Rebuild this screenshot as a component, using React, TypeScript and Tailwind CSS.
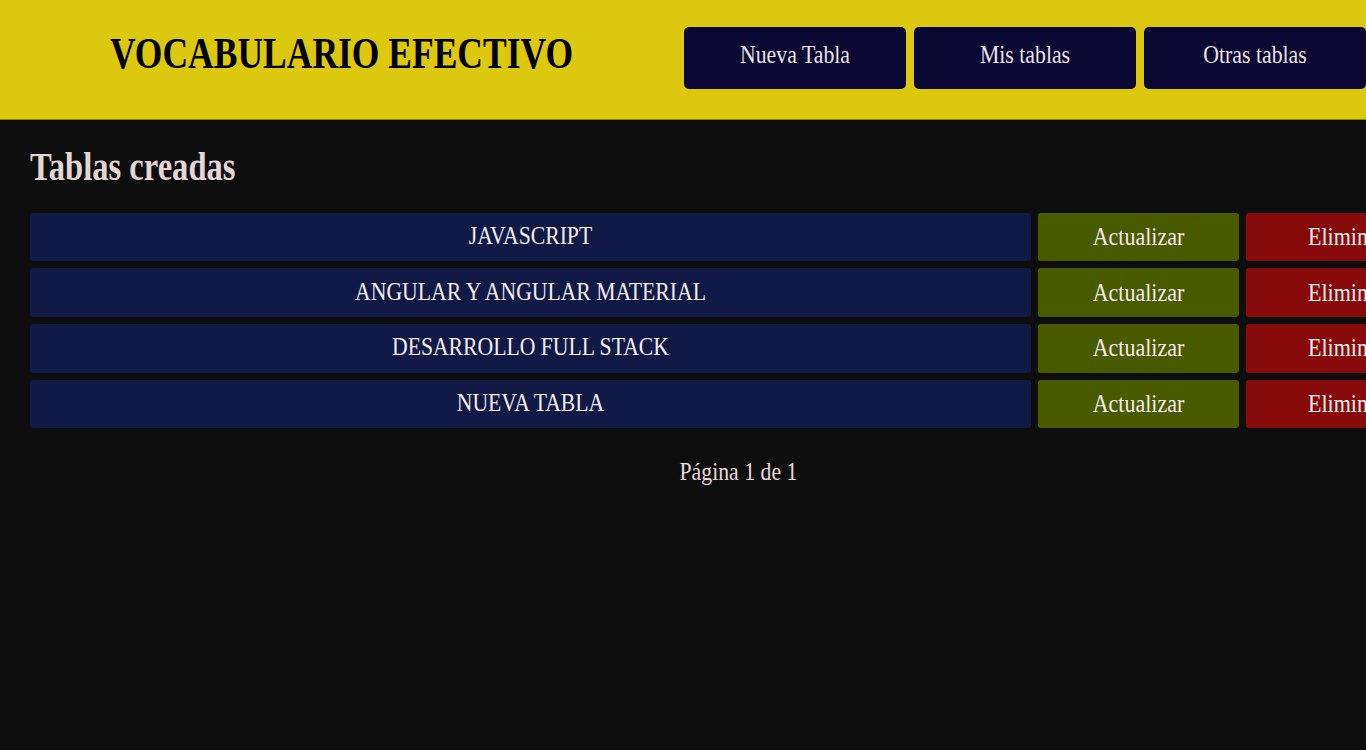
import React from "react";

const rows = ["JAVASCRIPT", "ANGULAR Y ANGULAR MATERIAL", "DESARROLLO FULL STACK", "NUEVA TABLA"];

export default function App() {
  const serif = { fontFamily: '"Liberation Serif", "Times New Roman", serif' };
  return (
    <div className="w-[1366px] h-[750px] overflow-hidden bg-[#0f0e0f]" style={serif}>
      <header className="h-[120px] bg-[#dbc80f] border-b border-[#8f8208] grid grid-cols-2">
        <div className="flex items-center justify-center pb-[12px]">
          <h1 className="text-[35.5px] leading-none font-bold text-black scale-y-125 whitespace-nowrap">
            VOCABULARIO EFECTIVO
          </h1>
        </div>
        <nav className="flex gap-[8px] pt-[27px] pl-px">
          {["Nueva Tabla", "Mis tablas", "Otras tablas"].map((b) => (
            <button
              key={b}
              className="w-[222px] h-[62px] shrink-0 rounded-[5px] bg-[#0b0834] text-[#ece4e4] text-[21.8px] leading-none flex items-center justify-center pb-[4px]"
            >
              <span className="scale-y-[1.18] whitespace-nowrap">{b}</span>
            </button>
          ))}
        </nav>
      </header>
      <main className="pl-[30px] w-[1447px]">
        <h2 className="pt-[30px] text-[32.6px] leading-none font-bold text-[#e2d6d6]">
          <span className="inline-block scale-y-125 origin-center">Tablas creadas</span>
        </h2>
        <div className="mt-[30px] flex flex-col gap-[7px]">
          {rows.map((r) => (
            <div key={r} className="flex gap-[7px] h-[48.7px]">
              <div className="w-[1001px] shrink-0 rounded-[3px] bg-[#111a47] flex items-center justify-center text-[#f4eeee] text-[21.7px] leading-none">
                <span className="scale-y-[1.18] whitespace-nowrap">{r}</span>
              </div>
              <div className="w-[201px] shrink-0 rounded-[3px] bg-[#4a5a00] flex items-center justify-center text-[#f4eeee] text-[22px] leading-none">
                <span className="scale-y-[1.18]">Actualizar</span>
              </div>
              <div className="w-[201px] shrink-0 rounded-[3px] bg-[#880b0b] flex items-center justify-center text-[#f4eeee] text-[22px] leading-none">
                <span className="scale-y-[1.18]">Eliminar</span>
              </div>
            </div>
          ))}
        </div>
        <div className="mt-[34px] text-center text-[21.8px] leading-none text-[#e6dcdc]">
          <span className="inline-block scale-y-[1.2]">Página 1 de 1</span>
        </div>
      </main>
    </div>
  );
}
